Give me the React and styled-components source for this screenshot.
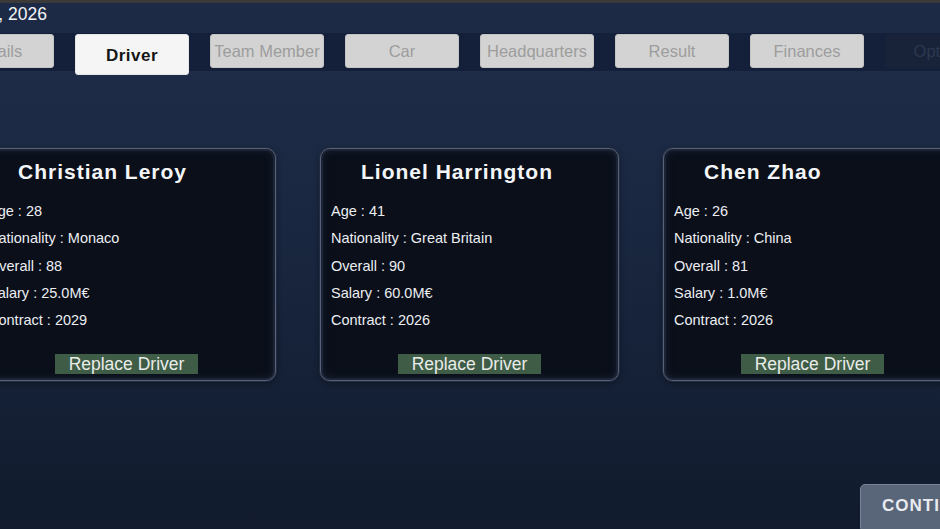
import React from "react";
import styled, { createGlobalStyle } from "styled-components";

const GlobalStyle = createGlobalStyle`
  html, body {
    margin: 0;
    padding: 0;
    background: #111b2d;
  }
  body {
    font-family: "Liberation Sans", Arial, sans-serif;
  }
`;

const tabs = [
  "Details",
  "Driver",
  "Team Member",
  "Car",
  "Headquarters",
  "Result",
  "Finances",
  "Options",
];

const drivers = [
  { name: "Christian Leroy", age: 28, nationality: "Monaco", overall: 88, salary: "25.0M€", contract: 2029 },
  { name: "Lionel Harrington", age: 41, nationality: "Great Britain", overall: 90, salary: "60.0M€", contract: 2026 },
  { name: "Chen Zhao", age: 26, nationality: "China", overall: 81, salary: "1.0M€", contract: 2026 },
];

const App = () => {
  return (
    <>
      <GlobalStyle />
      <Screen>
        <TopStrip />
        <Header>
          <DateBox>
            <DateText>Monday, January 5, 2026</DateText>
          </DateBox>
        </Header>
        <TabBar>
          {tabs.map(tab => (
            <Tab
              key={tab}
              $active={tab === "Driver"}
              $disabled={tab === "Options"}
            >
              {tab}
            </Tab>
          ))}
        </TabBar>
        <Main>
          <CardRow>
            {drivers.map(d => (
              <DriverCard key={d.name}>
                <DriverName>{d.name}</DriverName>
                <InfoList>
                  <InfoLine>Age : {d.age}</InfoLine>
                  <InfoLine>Nationality : {d.nationality}</InfoLine>
                  <InfoLine>Overall : {d.overall}</InfoLine>
                  <InfoLine>Salary : {d.salary}</InfoLine>
                  <InfoLine>Contract : {d.contract}</InfoLine>
                </InfoList>
                <ReplaceBtn>Replace Driver</ReplaceBtn>
              </DriverCard>
            ))}
          </CardRow>
          <Footer>
            <ContinueBtn>CONTINUE</ContinueBtn>
          </Footer>
        </Main>
      </Screen>
    </>
  );
};

export default App;

const Screen = styled.div`
  width: 940px;
  height: 529px;
  overflow: hidden;
  display: flex;
  flex-direction: column;
  background: #111b2d;
`;

const TopStrip = styled.div`
  height: 3px;
  flex-shrink: 0;
  background: #3b3a38;
`;

const Header = styled.div`
  height: 30px;
  flex-shrink: 0;
  display: flex;
  align-items: center;
  background: #1d2a46;
`;

const DateBox = styled.div`
  width: 47px;
  display: flex;
  justify-content: flex-end;
  margin-top: -8px;
`;

const DateText = styled.span`
  white-space: nowrap;
  color: #f2f4f7;
  font-size: 17.5px;
`;

const TabBar = styled.div`
  height: 37px;
  flex-shrink: 0;
  display: flex;
  align-items: flex-start;
  gap: 21px;
  padding-top: 1px;
  margin-left: -60px;
  background: #14203a;
  position: relative;
  z-index: 1;
`;

const Tab = styled.div`
  width: 114px;
  flex-shrink: 0;
  height: ${p => (p.$active ? "41px" : "34px")};
  box-sizing: border-box;
  display: flex;
  align-items: center;
  justify-content: center;
  border-radius: 3px;
  background: ${p => (p.$active ? "#f5f5f5" : p.$disabled ? "#18233a" : "#d3d3d3")};
  border: 1px solid ${p => (p.$active ? "#e6e6e6" : p.$disabled ? "#18233a" : "#c4c4c4")};
  color: ${p => (p.$active ? "#161616" : p.$disabled ? "#2c384e" : "#9d9d9d")};
  font-size: ${p => (p.$active ? "17px" : "16.5px")};
  font-weight: ${p => (p.$active ? 700 : 400)};
  letter-spacing: ${p => (p.$active ? "0.5px" : "0")};
  padding-top: ${p => (p.$active ? "3px" : "0")};
  white-space: nowrap;
  overflow: hidden;
`;

const Main = styled.div`
  flex: 1;
  display: flex;
  flex-direction: column;
  background: linear-gradient(180deg, #1e2c48 0%, #18253d 45%, #111b2d 100%);
`;

const CardRow = styled.div`
  display: flex;
  gap: 44px;
  margin-top: 77px;
  margin-left: -23px;
`;

const DriverCard = styled.div`
  width: 299px;
  height: 233px;
  flex-shrink: 0;
  box-sizing: border-box;
  display: flex;
  flex-direction: column;
  padding: 10px 10px 8px 10px;
  border-radius: 10px;
  background: #0a0f1a;
  border: 1px solid #56627a;
  box-shadow: inset 0 0 0 2px #1b2334, inset 0 0 6px 3px #141c2b,
    0 0 0 1px #222c40, 0 2px 6px rgba(0, 0, 0, 0.4);
`;

const DriverName = styled.h2`
  margin: 0 0 0 30px;
  font-size: 21px;
  font-weight: 700;
  letter-spacing: 1px;
  line-height: 26px;
  color: #f4f5f7;
`;

const InfoList = styled.div`
  display: flex;
  flex-direction: column;
  margin-top: 13px;
`;

const InfoLine = styled.p`
  margin: 0;
  font-size: 14.5px;
  line-height: 27.3px;
  color: #eceef2;
  white-space: nowrap;
`;

const ReplaceBtn = styled.button`
  align-self: center;
  margin-top: auto;
  width: 143px;
  height: 20px;
  padding: 0;
  border: none;
  background: #3f5d46;
  color: #e9ece9;
  font-family: "Liberation Sans", Arial, sans-serif;
  font-size: 17.5px;
  line-height: 20px;
  cursor: pointer;
  position: relative;
  top: 2px;
`;

const Footer = styled.div`
  display: flex;
  margin-top: auto;
  padding-left: 860px;
`;

const ContinueBtn = styled.button`
  width: 150px;
  height: 48px;
  flex-shrink: 0;
  margin-bottom: -3px;
  box-sizing: border-box;
  border-radius: 5px;
  border: 1px solid #78839a;
  background: #596579;
  color: #e8ebf0;
  font-family: "Liberation Sans", Arial, sans-serif;
  font-size: 17px;
  font-weight: 700;
  letter-spacing: 1px;
  text-align: left;
  padding: 0 0 4px 21px;
  cursor: pointer;
`;
